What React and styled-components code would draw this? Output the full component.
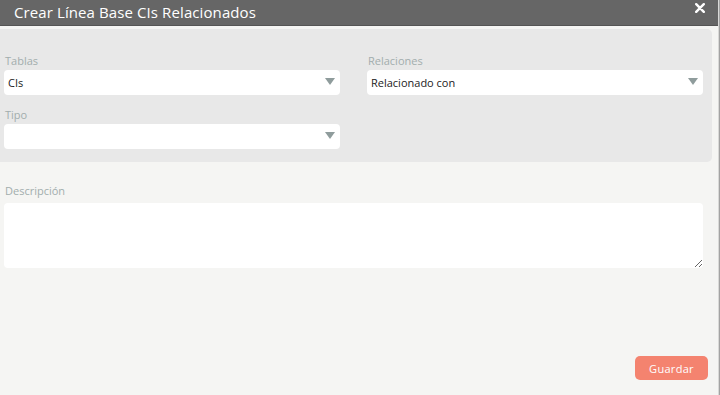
import React from 'react'
import styled, { createGlobalStyle } from 'styled-components'

const Global = createGlobalStyle`
  html, body {
    margin: 0;
    padding: 0;
    background: #f5f5f3;
    font-family: "Open Sans", "Liberation Sans", sans-serif;
  }
  * { box-sizing: border-box; }
`

const Page = styled.div`
  display: flex;
  width: 720px;
  height: 395px;
  overflow: hidden;
`
const Dialog = styled.div`
  flex: 1;
  display: flex;
  flex-direction: column;
  background: #f5f5f3;
`
const Scroller = styled.div`
  width: 2px;
  background: #a3a3a3;
  border-left: 1px solid #d9d9d7;
`
const Header = styled.div`
  height: 26px;
  background: #666666;
  display: flex;
  align-items: center;
  justify-content: space-between;
  padding: 0 13px 0 14px;
  border-bottom: 1px solid #555;
`
const Title = styled.h1`
  margin: 0;
  font-size: 15px;
  font-weight: 400;
  color: #fff;
  line-height: 20px;
  margin-top: -2px;
  letter-spacing: 0.1px;
`
const Close = styled.svg`
  width: 10px;
  height: 10px;
  margin-top: -9px;
`
const Panel = styled.div`
  margin: 3px 6px 0 0;
  background: #e8e8e8;
  border-radius: 0 5px 5px 0;
  padding: 24px 9px 13px 4px;
  display: grid;
  grid-template-columns: 1fr 1fr;
  column-gap: 27px;
  row-gap: 12px;
`
const Field = styled.div`
  display: flex;
  flex-direction: column;
`
const Label = styled.label`
  font-size: 11px;
  line-height: 15px;
  color: #a2adad;
  margin-bottom: ${({ $gap }) => $gap || 2}px;
  padding-left: 1px;
`
const Select = styled.div`
  height: 25px;
  background: #fff;
  border-radius: 4px;
  display: flex;
  align-items: center;
  justify-content: space-between;
  padding: 0 5px 0 4px;
  font-size: 11px;
  color: #222;
`
const Arrow = styled.span`
  width: 0;
  height: 0;
  border-left: 5px solid transparent;
  border-right: 5px solid transparent;
  border-top: 7px solid #8f9c9c;
  margin-top: -3px;
`
const Body = styled.div`
  flex: 1;
  display: flex;
  flex-direction: column;
  padding: 21px 15px 15px 4px;
`
const TextArea = styled.textarea`
  height: 65px;
  border: none;
  border-radius: 4px;
  background: #fff;
  resize: vertical;
  outline: none;
  font-family: inherit;
  font-size: 11px;
`
const Footer = styled.div`
  margin-top: auto;
  display: flex;
  justify-content: flex-end;
  margin-right: -5px;
`
const Button = styled.button`
  width: 73px;
  height: 24px;
  border: none;
  border-radius: 5px;
  background: #f4836f;
  color: #fff;
  font-family: inherit;
  font-size: 11px;
  letter-spacing: 0.3px;
`

function SelectField({ label, value }) {
  return (
    <Field>
      <Label>{label}</Label>
      <Select>
        <span>{value}</span>
        <Arrow />
      </Select>
    </Field>
  )
}

export default function App() {
  return (
    <Page>
      <Global />
      <Dialog>
        <Header>
          <Title>Crear Línea Base CIs Relacionados</Title>
          <Close viewBox="0 0 10 10">
            <path d="M1.2 1.2 L8.8 8.8 M8.8 1.2 L1.2 8.8" stroke="#fff" strokeWidth="2.4" strokeLinecap="round" />
          </Close>
        </Header>
        <Panel>
          <SelectField label="Tablas" value="CIs" />
          <SelectField label="Relaciones" value="Relacionado con" />
          <SelectField label="Tipo" value="" />
        </Panel>
        <Body>
          <Label $gap={5}>Descripción</Label>
          <TextArea />
          <Footer>
            <Button>Guardar</Button>
          </Footer>
        </Body>
      </Dialog>
      <Scroller />
    </Page>
  )
}
